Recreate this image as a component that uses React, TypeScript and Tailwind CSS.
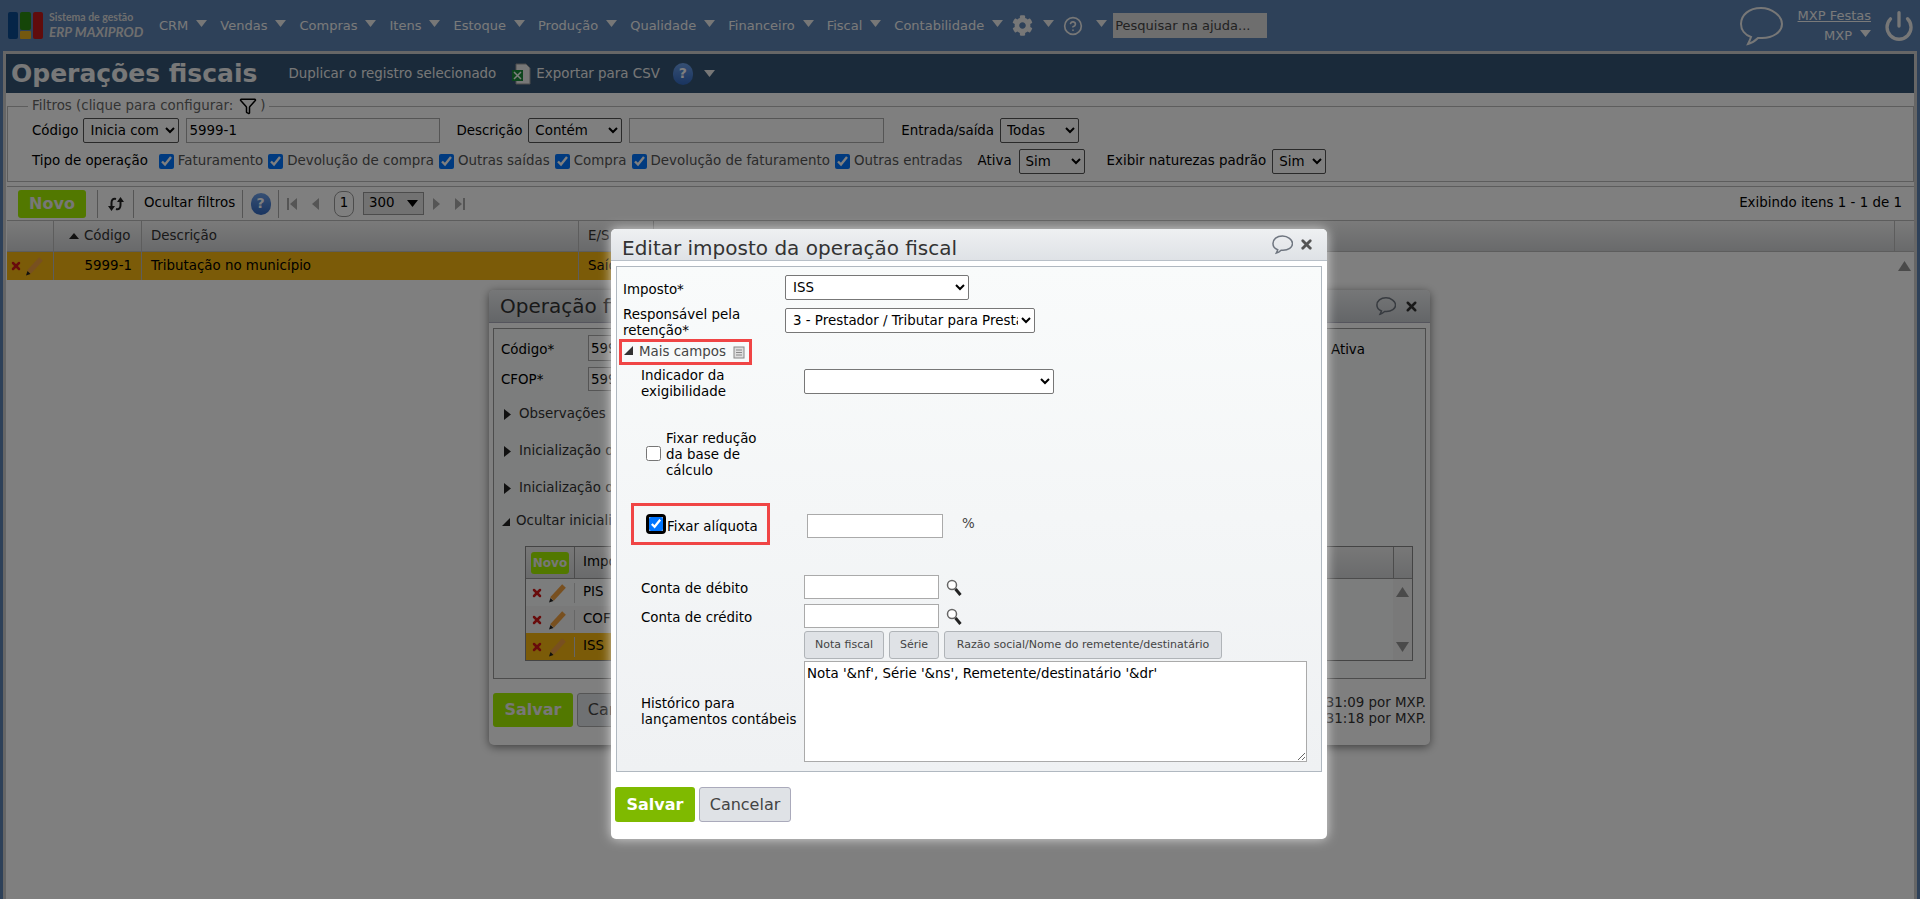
import { CircleHelp, Funnel, Power, X } from "lucide-react";
import { FaCog } from "react-icons/fa";

const font = "font-['DejaVu_Sans',sans-serif]";

const navItems = [
  "CRM",
  "Vendas",
  "Compras",
  "Itens",
  "Estoque",
  "Produção",
  "Qualidade",
  "Financeiro",
  "Fiscal",
  "Contabilidade",
];

const Caret = ({ className = "" }: { className?: string }) => (
  <svg width="11" height="7" viewBox="0 0 11 7" className={className}>
    <path d="M0 0h11L5.5 7z" fill="currentColor" />
  </svg>
);

const Chat = ({ size, stroke = "#6f7680", width = 1.5 }: { size: number; stroke?: string; width?: number }) => (
  <svg width={size} height={size} viewBox="0 0 44 40" fill="none" stroke={stroke} strokeWidth={width * (44 / size)}>
    <path d="M22 2C10 2 2 9 2 18c0 6 4 11 10 13-1 3-2 5-3 7 4-1 7-3 10-6h4c11 0 20-6 20-14S33 2 22 2z" />
  </svg>
);

const Help = () => (
  <span className="flex h-[22px] w-[20px] items-center justify-center rounded-full bg-gradient-to-b from-[#6c9fe8] to-[#3268c0] text-[14px] font-bold text-white">?</span>
);

const Pencil = () => (
  <svg width="20" height="20" viewBox="0 0 20 20">
    <path d="M4 16L16 3" stroke="#f0a040" strokeWidth="5" />
    <path d="M1 19.500l4.500-1.500-3-3z" fill="#222" />
  </svg>
);

const Del = () => <X size={12} strokeWidth={5} className="shrink-0 text-[#d01818]" />;

const Loupe = () => (
  <svg width="16" height="17" viewBox="0 0 16 17" fill="none" className="ml-[7px]">
    <circle cx="6" cy="6" r="4.500" stroke="#666" strokeWidth="1.500" fill="#fff" />
    <path d="M9.500 10l5 6" stroke="#222" strokeWidth="3" />
  </svg>
);

const ArrowUp = () => (
  <svg width="13" height="10" viewBox="0 0 13 10"><path d="M0 10h13L6.500 0z" fill="#949494" /></svg>
);

const ArrowDown = () => (
  <svg width="13" height="10" viewBox="0 0 13 10"><path d="M0 0h13L6.500 10z" fill="#949494" /></svg>
);

const Check = ({ label }: { label: string }) => (
  <label className="flex items-center gap-[4px] text-[#555]">
    <input type="checkbox" defaultChecked className="h-[15px] w-[15px]" />
    {label}
  </label>
);

const Arrow = ({ d }: { d: string }) => (
  <svg width="10" height="14" viewBox="0 0 10 14" className="text-[#aaa]">
    <path d={d} fill="currentColor" />
  </svg>
);

const selectCls = "rounded-[2px] border border-[#555] bg-white text-black";
const inputCls = "border border-[#aaa] bg-white px-[2px] text-black";

const Page = () => (
  <div className="flex h-full flex-col">
    <header className="flex h-[51px] shrink-0 items-center text-[#f4f4f4]">
      <div className="ml-[8px] flex h-[27px] w-[35px] gap-[2px]">
        <div className="h-full w-[11px] rounded-[2px] bg-[#0a4a90]" />
        <div className="flex h-full w-[11px] flex-col gap-[1px]">
          <div className="flex-1 rounded-[2px] bg-[#2a8a10]" />
          <div className="h-[8px] rounded-[1px] bg-[#e8b020]" />
        </div>
        <div className="h-full w-[11px] rounded-[2px] bg-[#c01818]" />
      </div>
      <div className="ml-[6px] w-[96px] font-['Lato',sans-serif] font-bold text-[#ddd]">
        <div className="text-[10.500px] leading-[13px]">Sistema de gestão</div>
        <div className="text-[13.500px] italic leading-[16px]">ERP MAXIPROD</div>
      </div>
      <nav className="ml-[14px] flex items-center text-[13px]">
        {navItems.map((n) => (
          <span key={n} className="mr-[13px] flex items-center gap-[8px]">
            {n}
            <Caret className="-mt-[4px] text-[#eee]" />
          </span>
        ))}
      </nav>
      <FaCog size={21} className="-ml-[4px] text-[#eee]" />
      <Caret className="-mt-[4px] ml-[10px] text-[#eee]" />
      <CircleHelp size={20} className="ml-[9px] text-[#eee]" />
      <Caret className="-mt-[4px] ml-[13px] text-[#eee]" />
      <input
        placeholder="Pesquisar na ajuda..."
        className="ml-[6px] h-[25px] w-[154px] bg-[#ddd] px-[2px] text-[13px] placeholder:text-[#444]"
      />
      <div className="ml-auto flex items-center">
        <Chat size={44} stroke="#eee" width={2} />
        <div className="ml-[13px] flex w-[75px] flex-col items-end text-[13px] leading-[20px]">
          <span className="underline">MXP Festas</span>
          <span className="flex items-center gap-[8px]">
            MXP
            <Caret className="-mt-[4px]" />
          </span>
        </div>
        <Power size={32} strokeWidth={2.500} className="ml-[12px] mr-[5px] text-[#eee]" />
      </div>
    </header>

    <main className="mx-[3px] flex min-h-0 flex-1 flex-col border-[3px] border-b-0 border-[#ccc] bg-white">
      <div className="flex h-[39px] shrink-0 items-center bg-[#345574] text-[13.400px] text-[#eee]">
        <h1 className="ml-[5px] text-[25px] font-bold leading-none text-[#f0f0f0]">Operações fiscais</h1>
        <span className="ml-[31px] mt-[2px]">Duplicar o registro selecionado</span>
        <svg width="20" height="22" viewBox="0 0 20 22" className="ml-[15px]">
          <path d="M5 1h10l4 4v16H5z" fill="#eee" stroke="#999" />
          <rect x="1" y="7" width="11" height="11" fill="#1a8a3a" />
          <path d="M3 9l7 7M10 9l-7 7" stroke="#fff" strokeWidth="1.500" />
        </svg>
        <span className="ml-[5px] mt-[2px]">Exportar para CSV</span>
        <span className="ml-[13px]"><Help /></span>
        <Caret className="ml-[11px]" />
      </div>

      <fieldset className="ml-[1px] mt-[3px] h-[86px] shrink-0 border border-[#bbb] px-[24px] text-[13.400px] text-black">
        <legend className="-ml-[4px] flex h-[20px] items-center px-[4px] text-[#666]">
          Filtros (clique para configurar:
          <Funnel size={18} className="ml-[6px] text-black" />
          <span className="ml-[3px]">)</span>
        </legend>
        <div className="mt-[2px] flex h-[25px] items-center">
          <span className="mt-[2px]">Código</span>
          <select defaultValue="a" className={`${selectCls} ml-[5px] h-[25px] w-[96px] pl-[2px]`}>
            <option value="a">Inicia com</option>
          </select>
          <input defaultValue="5999-1" className={`${inputCls} ml-[7px] h-[25px] w-[254px]`} />
          <span className="ml-[16px] mt-[2px]">Descrição</span>
          <select defaultValue="a" className={`${selectCls} ml-[6px] h-[25px] w-[94px] pl-[2px]`}>
            <option value="a">Contém</option>
          </select>
          <input className={`${inputCls} ml-[7px] h-[25px] w-[255px]`} />
          <span className="ml-[17px] mt-[2px]">Entrada/saída</span>
          <select defaultValue="a" className={`${selectCls} ml-[6px] h-[25px] w-[79px] pl-[2px]`}>
            <option value="a">Todas</option>
          </select>
        </div>
        <div className="mt-[6px] flex h-[25px] items-center">
          <span className="mr-[11px]">Tipo de operação</span>
          <div className="flex items-center gap-[5px]">
            <Check label="Faturamento" />
            <Check label="Devolução de compra" />
            <Check label="Outras saídas" />
            <Check label="Compra" />
            <Check label="Devolução de faturamento" />
            <Check label="Outras entradas" />
          </div>
          <span className="ml-[15px]">Ativa</span>
          <select defaultValue="a" className={`${selectCls} ml-[7px] h-[25px] w-[66px] pl-[2px]`}>
            <option value="a">Sim</option>
          </select>
          <span className="ml-[22px]">Exibir naturezas padrão</span>
          <select defaultValue="a" className={`${selectCls} ml-[6px] h-[25px] w-[54px] pl-[2px]`}>
            <option value="a">Sim</option>
          </select>
        </div>
      </fieldset>

      <div className="ml-[1px] mt-[4px] flex h-[35px] shrink-0 items-center border-y border-[#bbb] text-[13.400px] text-black">
        <button className="ml-[11px] h-[28px] w-[68px] rounded-[3px] bg-[#a4f000] text-[16px] font-bold text-[#eee]">Novo</button>
        <div className="ml-[11px] flex h-[28px] w-[37px] items-center justify-center border-x border-[#aaa]">
          <svg width="18" height="18" viewBox="0 0 18 18" fill="none">
            <path d="M9 4C6 3 4.500 5 4.500 8v4M9 14c3 1 4.500-1 4.500-4V6" stroke="#222" strokeWidth="2" />
            <path d="M1 11h7l-3.500 5zM10 7h7l-3.500-5z" fill="#222" />
          </svg>
        </div>
        <span className="ml-[10px] w-[98px] whitespace-nowrap">Ocultar filtros</span>
        <div className="flex h-[28px] w-[37px] items-center justify-center border-x border-[#aaa]">
          <Help />
        </div>
        <div className="ml-[8px] flex items-center gap-[13px]">
          <Arrow d="M0 1h2v12H0zM10 1v12L3 7z" />
          <Arrow d="M9 1v12L2 7z" />
        </div>
        <span className="ml-[14px] flex h-[26px] w-[20px] items-center justify-center rounded-[8px] border border-[#999]">1</span>
        <div className="ml-[9px] flex h-[23px] w-[61px] items-center justify-between border border-[#999] bg-[#e4e4e4] px-[5px]">
          300
          <Caret className="text-black" />
        </div>
        <div className="ml-[8px] flex items-center gap-[13px]">
          <Arrow d="M1 1v12l7-6z" />
          <Arrow d="M0 1v12l7-6zM8 1h2v12H8z" />
        </div>
        <span className="ml-auto mr-[12px]">Exibindo itens 1 - 1 de 1</span>
      </div>

      <div className="ml-[1px] grid h-[31px] shrink-0 grid-cols-[47px_88px_437px_75px_1fr_19px] border-b border-[#bbb] bg-gradient-to-b from-[#f6f6f6] to-[#d2d4d6] text-[13.400px] text-[#333]">
        <div className="border-r border-[#bbb]" />
        <div className="flex items-center border-r border-[#bbb] pl-[15px]">
          <svg width="10" height="6" viewBox="0 0 10 6"><path d="M0 6h10L5 0z" fill="#222" /></svg>
          <span className="ml-[5px]">Código</span>
        </div>
        <div className="flex items-center border-r border-[#bbb] pl-[9px]">Descrição</div>
        <div className="flex items-center border-r border-[#bbb] pl-[9px]">E/S</div>
        <div className="border-r border-[#bbb]" />
        <div />
      </div>
      <div className="ml-[1px] grid h-[28px] shrink-0 grid-cols-[47px_88px_437px_75px_1fr_19px] text-[13.400px] text-black">
        <div className="flex items-center gap-[3px] border-r border-[#bbb] bg-[#f6b610] pl-[3px]">
          <Del />
          <Pencil />
        </div>
        <div className="flex items-center justify-end border-r border-[#bbb] bg-[#f6b610] pr-[9px]">5999-1</div>
        <div className="flex items-center border-r border-[#bbb] bg-[#f6b610] pl-[9px]">Tributação no município</div>
        <div className="flex items-center bg-[#f6b610] pl-[9px]">Saída</div>
        <div />
        <div className="flex items-center justify-center">
          <ArrowUp />
        </div>
      </div>
    </main>
  </div>
);

const taxRows = [
  { name: "PIS", bg: "" },
  { name: "COFINS", bg: "bg-[#f2f2f2]" },
  { name: "ISS", bg: "bg-[#f6b610]" },
];

const collapsed = [
  { label: "Observações", mt: "mt-[12px]" },
  { label: "Inicialização de", mt: "mt-[14px]" },
  { label: "Inicialização de", mt: "mt-[14px]" },
];

const OperationDialog = () => (
  <div className="absolute left-[489px] top-[290px] flex h-[455px] w-[941px] flex-col rounded-[5px] bg-white text-[13.400px] text-black shadow-[0_2px_10px_rgba(0,0,0,0.5)]">
    <div className="flex h-[33px] shrink-0 items-center rounded-t-[5px] border-b border-[#aab] bg-gradient-to-b from-[#eceef0] to-[#c8ccd0] px-[11px]">
      <span className="text-[20px] text-[#333]">Operação fiscal</span>
      <span className="ml-auto flex items-center gap-[8px]">
        <Chat size={20} />
        <X size={15} strokeWidth={4} className="text-[#333]" />
      </span>
    </div>
    <div className="mx-[4px] mt-[5px] flex h-[351px] shrink-0 flex-col border border-[#999] bg-[#f8fafa] pl-[7px]">
      <div className="mt-[6px] flex h-[26px] items-center">
        <span className="mt-[5px] w-[87px]">Código*</span>
        <input defaultValue="5999" className={`${inputCls} h-[26px] w-[100px]`} />
        <span className="ml-auto mr-[60px] mt-[5px]">Ativa</span>
      </div>
      <div className="mt-[6px] flex h-[24px] items-center">
        <span className="mt-[2px] w-[87px]">CFOP*</span>
        <input defaultValue="5999" className={`${inputCls} h-[24px] w-[100px]`} />
      </div>
      {collapsed.map((t, i) => (
        <div key={i} className={`flex h-[23px] items-center gap-[7px] pl-[3px] text-[#333] ${t.mt}`}>
          <svg width="8" height="11" viewBox="0 0 8 11"><path d="M0 0v11l7-5.500z" fill="#222" /></svg>
          {t.label}
        </div>
      ))}
      <div className="mt-[10px] flex h-[23px] items-center gap-[5px] text-[#333]">
        <svg width="10" height="10" viewBox="0 0 10 10"><path d="M9 1v8H1z" fill="#222" /></svg>
        Ocultar inicialização
      </div>
      <div className="ml-[24px] mr-[12px] mt-[13px] flex flex-col border border-[#888]">
        <div className="grid h-[32px] grid-cols-[49px_1fr_19px] border-b border-[#999] bg-gradient-to-b from-[#f0f0f0] to-[#d4d6d8]">
          <div className="flex items-center justify-center border-r border-[#999]">
            <span className="flex h-[22px] w-[38px] items-center justify-center rounded-[3px] bg-[#a4f000] text-[12px] font-bold leading-none text-[#eee]">Novo</span>
          </div>
          <div className="flex items-center pl-[8px]">Imposto</div>
          <div className="border-l border-[#999]" />
        </div>
        <div className="relative">
          {taxRows.map((r) => (
            <div key={r.name} className={`flex h-[27px] w-[700px] items-center ${r.bg}`}>
              <div className="flex w-[49px] items-center gap-[5px] border-r border-[#ccc] pl-[5px]">
                <Del />
                <Pencil />
              </div>
              <span className="pl-[8px]">{r.name}</span>
            </div>
          ))}
          <div className="absolute inset-y-0 right-0 flex w-[19px] flex-col items-center justify-between bg-[#f2f2f2] py-[8px]">
            <ArrowUp />
            <ArrowDown />
          </div>
        </div>
      </div>
    </div>
    <div className="mx-[4px] mt-[14px] flex items-start">
      <button className="h-[34px] w-[80px] rounded-[3px] bg-[#a4f000] text-[16px] font-bold text-[#eee]">Salvar</button>
      <button className="ml-[4px] h-[34px] w-[92px] rounded-[3px] border border-[#aaa] bg-[#dfe2e6] text-[16px] text-[#444]">Cancelar</button>
      <div className="ml-auto mt-[2px] whitespace-nowrap text-right leading-[16px] text-[#333]">
        <div>01:31:09 por MXP.</div>
        <div>01:31:18 por MXP.</div>
      </div>
    </div>
  </div>
);

const TaxDialog = () => (
  <div className="absolute left-[611px] top-[229px] flex h-[610px] w-[716px] flex-col rounded-[5px] bg-white text-[13.400px] leading-[16px] text-black shadow-[0_0_12px_rgba(255,255,255,0.7)]">
    <div className="flex h-[32px] shrink-0 items-center rounded-t-[5px] border-b border-[#b8c0c8] bg-gradient-to-b from-[#eef0f2] to-[#dfe2e6] pl-[11px] pr-[13px]">
      <span className="mt-[6px] text-[20px] leading-none text-[#333]">Editar imposto da operação fiscal</span>
      <span className="ml-auto mt-[-1px] flex items-center gap-[6px]">
        <Chat size={21} />
        <X size={15} strokeWidth={4.500} className="text-[#555]" />
      </span>
    </div>

    <div className="mx-[5px] mt-[5px] flex h-[506px] shrink-0 flex-col border border-[#b0b8c0] bg-gradient-to-b from-[#f9fbfb] to-[#eff1f3]">
      <div className="mt-[8px] flex items-center pl-[6px]">
        <span className="mt-[4px] w-[162px]">Imposto*</span>
        <select defaultValue="a" className="h-[25px] w-[184px] rounded-[2px] border border-[#777] bg-white pl-[3px]">
          <option value="a">ISS</option>
        </select>
      </div>
      <div className="mt-[8px] flex items-start pl-[6px]">
        <span className="-mt-[1px] w-[162px]">Responsável pela retenção*</span>
        <select defaultValue="a" className="h-[25px] w-[250px] rounded-[2px] border border-[#777] bg-white pl-[3px]">
          <option value="a">3 - Prestador / Tributar para Prestador</option>
        </select>
      </div>

      <div className="ml-[2px] flex h-[26px] w-[133px] items-center border-[3px] border-[#f04545] pl-[2px] text-[#444]">
        <svg width="9" height="9" viewBox="0 0 9 9" className="-mt-[3px]"><path d="M9 0v9H0z" fill="#333" /></svg>
        <span className="ml-[6px] -mt-[1px] whitespace-nowrap">Mais campos</span>
        <svg width="12" height="13" viewBox="0 0 12 13" fill="none" stroke="#888" className="ml-[7px]">
          <rect x="1" y="1" width="10" height="11" fill="#ddd" />
          <path d="M3 4h6M3 6.500h6M3 9h6" />
        </svg>
      </div>

      <div className="ml-[24px] mt-[3px] flex items-start">
        <span className="w-[163px]">Indicador da exigibilidade</span>
        <select className="mt-[1px] h-[25px] w-[250px] rounded-[2px] border border-[#777] bg-white" />
      </div>

      <div className="ml-[29px] mt-[28px] flex items-center">
        <input type="checkbox" className="h-[15px] w-[15px]" />
        <span className="ml-[5px] mt-[3px] w-[100px]">Fixar redução da base de cálculo</span>
      </div>

      <div className="ml-[14px] mt-[24px] flex h-[42px] w-[139px] items-center border-[3px] border-[#f04545]">
        <span className="ml-[12px] flex h-[20px] w-[20px] items-center justify-center rounded-[4px] border-[3px] border-black">
          <input type="checkbox" defaultChecked className="h-[14px] w-[14px]" />
        </span>
        <span className="ml-[1px] mt-[6px] whitespace-nowrap">Fixar alíquota</span>
      </div>
      <div className="-mt-[31px] ml-[190px] flex h-[24px] items-center">
        <input className="h-[24px] w-[136px] border border-[#aaa] bg-white" />
        <span className="-mt-[4px] ml-[19px] text-[#444]">%</span>
      </div>

      <div className="ml-[24px] mt-[37px] flex h-[24px] items-center">
        <span className="mt-[3px] w-[163px]">Conta de débito</span>
        <input className="h-[24px] w-[135px] border border-[#aaa] bg-white" />
        <Loupe />
      </div>
      <div className="ml-[24px] mt-[5px] flex h-[24px] items-center">
        <span className="mt-[3px] w-[163px]">Conta de crédito</span>
        <input className="h-[24px] w-[135px] border border-[#aaa] bg-white" />
        <Loupe />
      </div>
      <div className="ml-[187px] mt-[3px] flex h-[28px] gap-[5px] text-[11px] text-[#444]">
        <button className="w-[80px] rounded-[3px] border border-[#b0b4b8] bg-[#dfe2e6]">Nota fiscal</button>
        <button className="w-[50px] rounded-[3px] border border-[#b0b4b8] bg-[#dfe2e6]">Série</button>
        <button className="w-[278px] rounded-[3px] border border-[#b0b4b8] bg-[#dfe2e6]">Razão social/Nome do remetente/destinatário</button>
      </div>
      <div className="ml-[24px] mt-[2px] flex items-center">
        <span className="w-[163px] shrink-0">Histórico para lançamentos contábeis</span>
        <textarea
          defaultValue="Nota '&nf', Série '&ns', Remetente/destinatário '&dr'"
          className="h-[101px] w-[503px] border border-[#aaa] bg-white pl-[2px] pt-[4px]"
        />
      </div>
    </div>

    <div className="ml-[4px] mt-[15px] flex">
      <button className="h-[35px] w-[80px] rounded-[3px] bg-[#7fba00] text-[16px] font-bold text-white">Salvar</button>
      <button className="ml-[4px] h-[35px] w-[92px] rounded-[3px] border border-[#aab] bg-[#dfe2e6] text-[16px] text-[#444]">Cancelar</button>
    </div>
  </div>
);

export default function App() {
  return (
    <div className={`relative h-[899px] w-full overflow-hidden bg-[#5c82b2] ${font}`}>
      <Page />
      <OperationDialog />
      <div className="absolute inset-0 bg-black/50" />
      <TaxDialog />
    </div>
  );
}
